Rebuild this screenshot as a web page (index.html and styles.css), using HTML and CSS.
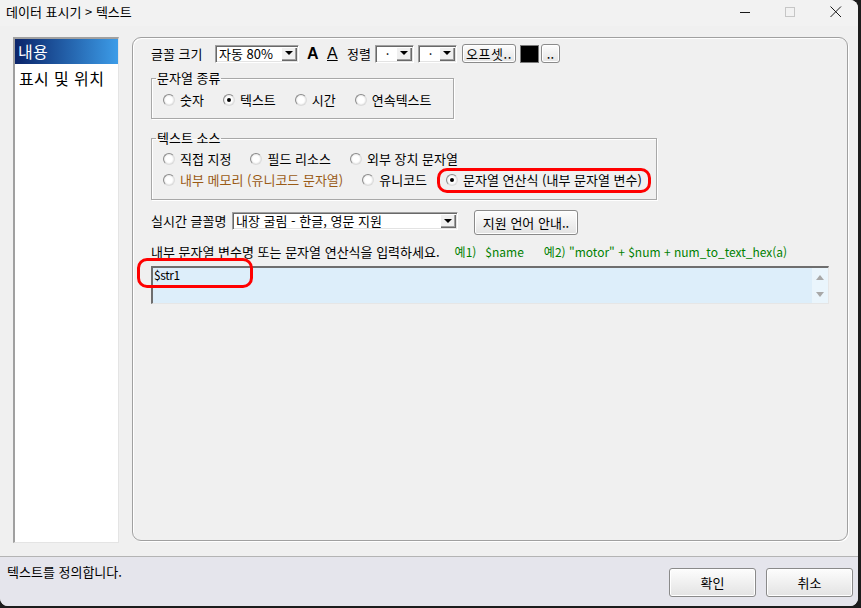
FILE: index.html
```html
<!DOCTYPE html>
<html lang="ko">
<head>
    <meta charset="UTF-8">
    <meta name="viewport" content="width=device-width, initial-scale=1.0">
    <title>데이터 표시기 &gt; 텍스트</title>
    <link rel="stylesheet" href="styles.css">
</head>
<body>
    <div class="window">
        <div class="titlebar">
            <span class="title">데이터 표시기 &gt; 텍스트</span>
            <div class="caps">
                <span class="cap"><svg width="11" height="11" viewBox="0 0 11 11"><path d="M0 5.5h10" stroke="#1a1a1a" stroke-width="1"/></svg></span>
                <span class="cap"><svg width="11" height="11" viewBox="0 0 11 11"><rect x="0.5" y="0.5" width="9" height="9" fill="none" stroke="#c6c6c6"/></svg></span>
                <span class="cap"><svg width="12" height="12" viewBox="0 0 12 12"><path d="M0.5 0.5l10.5 10.5M11 0.5l-10.5 10.5" stroke="#1a1a1a" stroke-width="1"/></svg></span>
            </div>
        </div>

        <div class="main">
            <ul class="side-list">
                <li class="selected">내용</li>
                <li>표시 및 위치</li>
            </ul>

            <div class="panel">
                <div class="font-row">
                    <span class="lbl lbl-size">글꼴 크기</span>
                    <div class="combo combo-size"><span class="val">자동 80%</span><span class="drop"></span></div>
                    <span class="fmt bold">A</span>
                    <span class="fmt under">A</span>
                    <span class="lbl lbl-align">정렬</span>
                    <div class="combo combo-small"><span class="val">·</span><span class="drop"></span></div>
                    <div class="combo combo-small"><span class="val">·</span><span class="drop"></span></div>
                    <button class="btn btn-offset">오프셋..</button>
                    <span class="swatch"></span>
                    <button class="btn btn-dots">..</button>
                </div>

                <fieldset class="group group-kind">
                    <legend>문자열 종류</legend>
                    <div class="opts">
                        <label class="opt"><span class="radio"></span>숫자</label>
                        <label class="opt"><span class="radio checked"></span>텍스트</label>
                        <label class="opt"><span class="radio"></span>시간</label>
                        <label class="opt"><span class="radio"></span>연속텍스트</label>
                    </div>
                </fieldset>

                <fieldset class="group group-source">
                    <legend>텍스트 소스</legend>
                    <div class="opts">
                        <label class="opt"><span class="radio"></span>직접 지정</label>
                        <label class="opt"><span class="radio"></span>필드 리소스</label>
                        <label class="opt"><span class="radio"></span>외부 장치 문자열</label>
                    </div>
                    <div class="opts">
                        <label class="opt brown"><span class="radio"></span>내부 메모리 (유니코드 문자열)</label>
                        <label class="opt"><span class="radio"></span>유니코드</label>
                        <label class="opt"><span class="radio checked"></span>문자열 연산식 (내부 문자열 변수)</label>
                    </div>
                </fieldset>

                <div class="name-row">
                    <span class="lbl lbl-name">실시간 글꼴명</span>
                    <div class="combo combo-name"><span class="val">내장 굴림 - 한글, 영문 지원</span><span class="drop"></span></div>
                    <button class="btn btn-lang">지원 언어 안내..</button>
                </div>

                <div class="hint">
                    내부 문자열 변수명 또는 문자열 연산식을 입력하세요.<span class="ex ex1">예1)</span><span class="ex ex-name">$name</span><span class="ex ex2">예2) "motor" + $num + num_to_text_hex(a)</span>
                </div>

                <div class="editor">
                    <div class="text">$str1</div>
                    <div class="vscroll">
                        <span class="arrow up"></span>
                        <span class="arrow down"></span>
                    </div>
                </div>

                <!-- annotation marks -->
                <span class="mark mark-expr"></span>
                <span class="mark mark-input"></span>
            </div>
        </div>

        <div class="status">
            <span class="status-text">텍스트를 정의합니다.</span>
            <div class="dlg-btns">
                <button class="btn btn-dlg">확인</button>
                <button class="btn btn-dlg">취소</button>
            </div>
        </div>
    </div>
</body>
</html>
```

FILE: styles.css
```css
html
{
    margin: 0;
    padding: 0;
}
body
{
    margin: 0;
    background-color: #1c1c1c;
    font-family: "Noto Sans CJK KR", "Noto Sans", sans-serif;
    font-size: 13px;
    color: #000;
}

.window
{
    width: 858px;
    height: 606px;
    background-color: #f0f0f0;
    border-radius: 0 8px 8px 8px;
    overflow: hidden;
    display: flex;
    flex-direction: column;
}

/* title bar */
.titlebar
{
    height: 26px;
    display: flex;
    align-items: center;
    padding-left: 6px;
    background-color: #f2f2f2;
}
.title
{
    line-height: 24px;
    margin-top: -2px;
}
.caps
{
    margin-left: auto;
    display: flex;
    margin-top: -2px;
}
.cap
{
    width: 45px;
    height: 24px;
    display: flex;
    align-items: center;
    justify-content: center;
}

/* main area */
.main
{
    height: 530px;
    display: flex;
    align-items: flex-start;
    padding: 11px 0 0 13px;
    box-sizing: border-box;
    gap: 13px;
}

.side-list
{
    list-style: none;
    margin: 0;
    padding: 0;
    width: 106px;
    height: 506px;
    box-sizing: border-box;
    background-color: #fff;
    border-style: solid;
    border-width: 2px 1px 1px 2px;
    border-color: #a0a0a0 #e4e4e4 #e4e4e4 #a0a0a0;
    font-size: 16px;
    letter-spacing: 0.4px;
}
.side-list li
{
    height: 25px;
    line-height: 25px;
    padding-left: 4px;
    white-space: nowrap;
}
.side-list li + li
{
    margin-top: 2px;
}
.side-list li.selected
{
    color: #fff;
    padding-left: 3px;
    background-image: linear-gradient(to right, #0a246a, #3c9ce8);
}

.panel
{
    position: relative;
    width: 716px;
    height: 504px;
    box-sizing: border-box;
    border: 1px solid #a0a0a0;
    border-radius: 9px;
    box-shadow: inset 1px 1px 0 #fff, 1px 1px 0 #fff;
    padding: 6px 0 0 18px;
}

/* first row: font size */
.font-row
{
    display: flex;
    align-items: center;
    height: 19px;
}
.lbl
{
    line-height: 18px;
    white-space: nowrap;
    flex-shrink: 0;
}
.lbl-size { width: 64px; }
.lbl-align { width: 28px; }
.lbl-name { width: 81px; }

.fmt
{
    width: 20px;
    font-family: "Liberation Sans", Arial, sans-serif;
    font-size: 16px;
    line-height: 18px;
}
.fmt.bold
{
    font-weight: bold;
    margin-left: 8px;
}
.fmt.under
{
    text-decoration: underline;
    text-underline-offset: 1px;
}

.combo
{
    display: flex;
    height: 18px;
    box-sizing: border-box;
    padding: 1px;
    background-color: #fff;
    border: 1px solid;
    border-color: #a0a0a0 #fff #fff #a0a0a0;
    box-shadow: inset 1px 1px 0 #696969, inset -1px -1px 0 #e3e3e3;
    flex-shrink: 0;
}
.combo .val
{
    flex: 1;
    padding-left: 2px;
    line-height: 14px;
    white-space: nowrap;
}
.combo .drop
{
    width: 16px;
    height: 14px;
    box-sizing: border-box;
    background-color: #f0f0f0;
    box-shadow: inset 1px 1px 0 #fff, inset -1px -1px 0 #696969, inset -2px -2px 0 #a0a0a0;
    display: flex;
    align-items: center;
    justify-content: center;
}
.combo .drop::after
{
    content: "";
    border-left: 4px solid transparent;
    border-right: 4px solid transparent;
    border-top: 4px solid #000;
    margin: 0 1px 1px 0;
}
.combo-size
{
    width: 84px;
}
.combo-small
{
    width: 39px;
    margin-right: 4px;
}
.combo-small .val
{
    text-align: center;
}
.combo-name
{
    width: 226px;
    margin-top: 2px;
}

.btn
{
    font-family: "Noto Sans CJK KR", "Noto Sans", sans-serif;
    font-size: 13px;
    color: #000;
    padding: 0;
    height: 19px;
    box-sizing: border-box;
    border: 1px solid #8a8a8a;
    border-radius: 3px;
    background-image: linear-gradient(#fdfdfd, #f0f0f0 50%, #e3e3e3);
    box-shadow: inset 0 0 0 1px #fff;
    line-height: 15px;
    white-space: nowrap;
    flex-shrink: 0;
}
.btn-offset
{
    width: 54px;
    margin-left: 1px;
    letter-spacing: 0.6px;
}
.swatch
{
    width: 19px;
    height: 18px;
    box-sizing: border-box;
    margin-left: 4px;
    background-color: #000;
    border: 1px solid #7a7a7a;
}
.btn-dots
{
    width: 19px;
    margin-left: 2px;
}

/* group boxes */
.group
{
    margin: 0;
    padding: 0 0 10px 4px;
    border: 1px solid #a8a8a8;
    box-shadow: inset 1px 1px 0 #fff, 1px 1px 0 #fff;
    min-width: 0;
    box-sizing: border-box;
}
.group legend
{
    padding: 0 1px;
    line-height: 14px;
}
.group-kind
{
    width: 303px;
    margin-top: 8px;
    padding-top: 7px;
}
.group-source
{
    width: 506px;
    margin-top: 12px;
    padding-top: 6px;
    padding-bottom: 11px;
}
.opts
{
    display: flex;
    gap: 19px;
    padding-left: 7px;
    height: 16px;
}
.opts + .opts
{
    margin-top: 5px;
}
.opt
{
    display: flex;
    align-items: center;
    white-space: nowrap;
    line-height: 16px;
}
.opt.brown
{
    color: #9a5b16;
}
.radio
{
    width: 12px;
    height: 12px;
    box-sizing: border-box;
    border-radius: 50%;
    margin-right: 5px;
    border: 1px solid;
    border-color: #8c8c8c #dcdcdc #dcdcdc #8c8c8c;
    background-image: radial-gradient(circle, #fff 45%, #e2e2e2 75%);
    display: flex;
    align-items: center;
    justify-content: center;
    flex-shrink: 0;
}
.radio.checked::after
{
    content: "";
    width: 4px;
    height: 4px;
    border-radius: 50%;
    background-color: #000;
}

/* font name row */
.name-row
{
    display: flex;
    align-items: flex-start;
    height: 25px;
    margin-top: 10px;
}
.name-row .lbl
{
    margin-top: 2px;
}
.btn-lang
{
    width: 104px;
    height: 25px;
    margin-left: 16px;
}

.hint
{
    margin-top: 10px;
    line-height: 14px;
    white-space: nowrap;
}
.ex
{
    color: #008000;
    font-size: 12px;
}
.ex1 { margin-left: 15px; }
.ex-name { margin-left: 9px; }
.ex2 { margin-left: 20px; }

.editor
{
    display: flex;
    width: 678px;
    height: 38px;
    margin-top: 7px;
    box-sizing: border-box;
    border-style: solid;
    border-width: 2px 1px 1px 2px;
    border-color: #6e6e6e #e6e6e6 #e6e6e6 #6e6e6e;
    background-color: #ddeefa;
}
.editor .text
{
    flex: 1;
    padding-left: 1px;
    font-size: 12px;
    letter-spacing: -0.4px;
    line-height: 14px;
}
.vscroll
{
    width: 16px;
    display: flex;
    flex-direction: column;
    justify-content: space-between;
    align-items: center;
    padding: 7px 0 6px;
    box-sizing: border-box;
    background-color: #eaf5fc;
}
.arrow
{
    border-left: 4px solid transparent;
    border-right: 4px solid transparent;
}
.arrow.up
{
    border-bottom: 5px solid #a8a8a8;
}
.arrow.down
{
    border-top: 5px solid #a8a8a8;
}

/* red annotation marks over the content */
.mark
{
    position: absolute;
    border: 3px solid #f00;
    border-radius: 10px;
    box-sizing: border-box;
}
.mark-expr
{
    left: 304px;
    top: 130px;
    width: 214px;
    height: 25px;
}
.mark-input
{
    left: 4px;
    top: 220px;
    width: 116px;
    height: 30px;
}

/* status bar */
.status
{
    flex: 1;
    display: flex;
    align-items: flex-start;
    border-top: 1px solid #b4b4b4;
    background-color: #e5e5ec;
    padding: 0 5px 0 7px;
}
.status-text
{
    margin-top: 8px;
    line-height: 14px;
}
.dlg-btns
{
    margin-left: auto;
    margin-top: 11px;
    display: flex;
    gap: 10px;
}
.btn-dlg
{
    width: 87px;
    height: 29px;
}
```
